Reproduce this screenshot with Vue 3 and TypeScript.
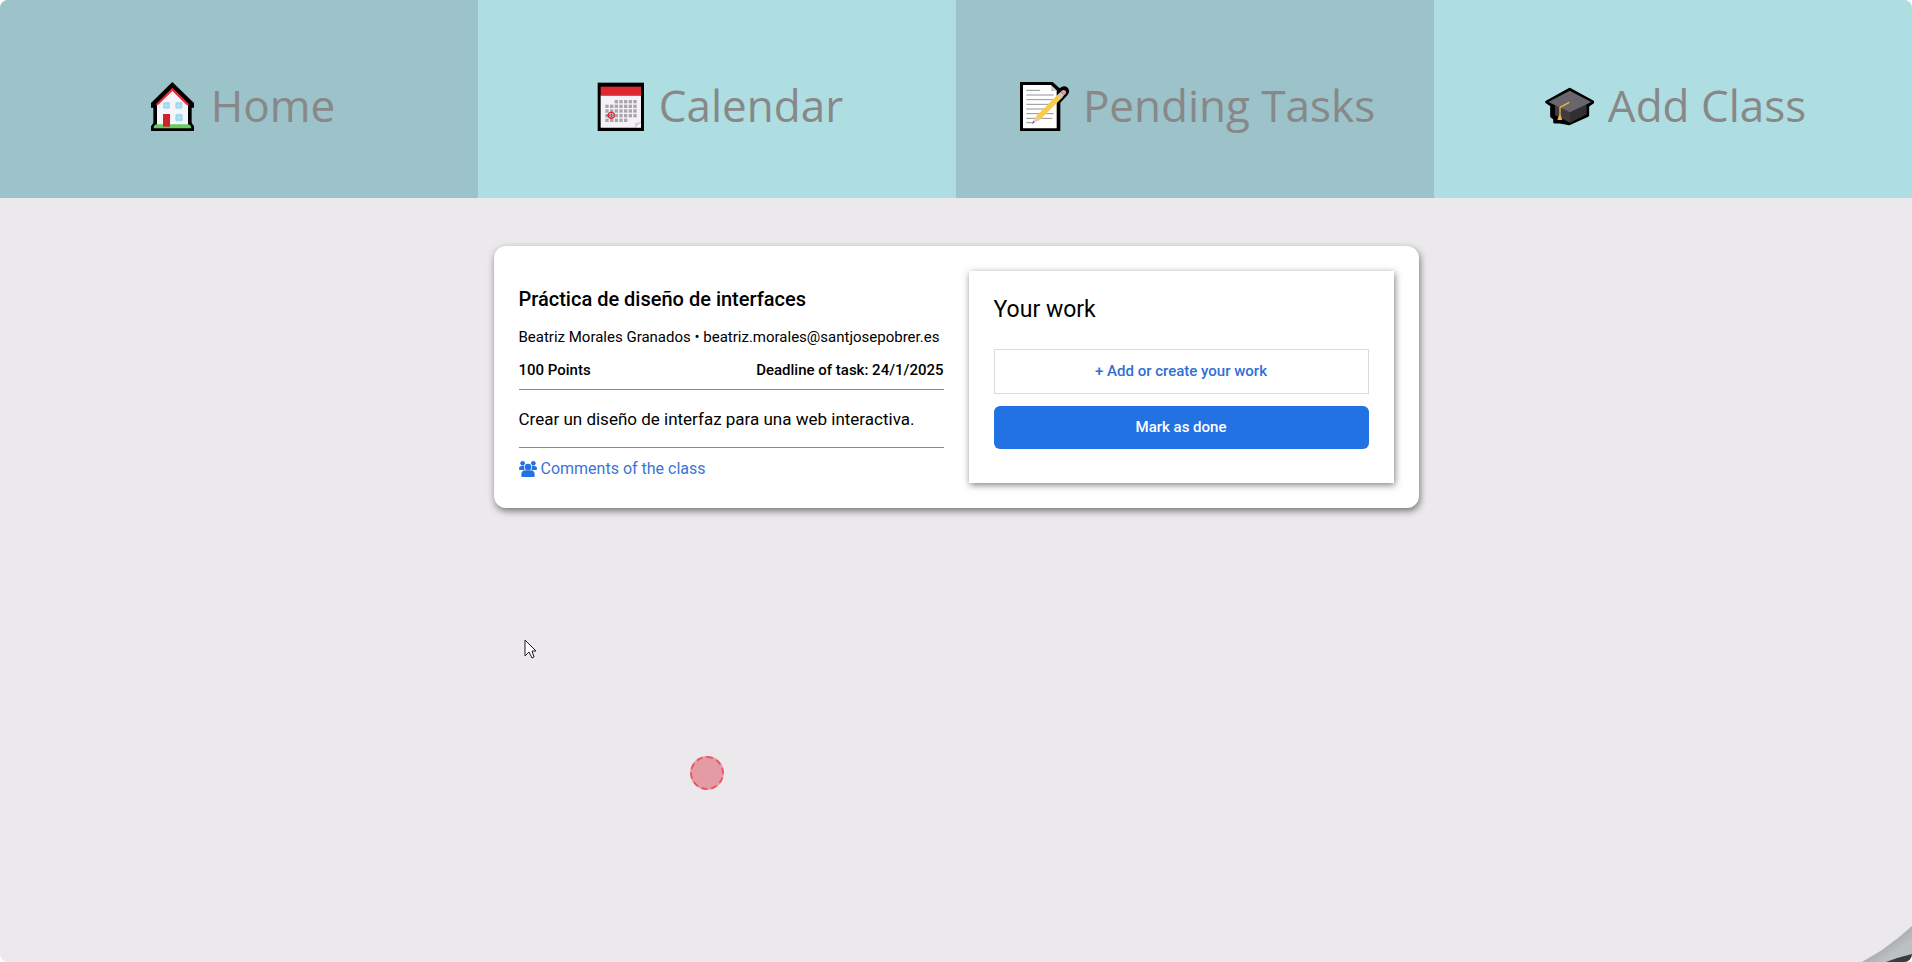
<script setup lang="ts">
type IconName = 'home' | 'calendar' | 'tasks' | 'class'

interface NavItem {
  icon: IconName
  label: string
}

interface Task {
  title: string
  teacher: string
  email: string
  points: number
  deadline: string
  description: string
}

const navItems: NavItem[] = [
  { icon: 'home', label: 'Home' },
  { icon: 'calendar', label: 'Calendar' },
  { icon: 'tasks', label: 'Pending Tasks' },
  { icon: 'class', label: 'Add Class' },
]

const task: Task = {
  title: 'Práctica de diseño de interfaces',
  teacher: 'Beatriz Morales Granados',
  email: 'beatriz.morales@santjosepobrer.es',
  points: 100,
  deadline: '24/1/2025',
  description: 'Crear un diseño de interfaz para una web interactiva.',
}

const calendarDays: [number, number][] = []
for (let row = 0; row < 5; row++) {
  for (let col = 0; col < 7; col++) {
    if ((row === 0 && col < 2) || (row === 4 && col > 4)) continue
    calendarDays.push([73 + col * 14, 91 + row * 14])
  }
}
</script>

<template>
  <div class="page">
    <nav class="nav">
      <a v-for="item in navItems" :key="item.label" class="nav-item" href="#">
        <svg v-if="item.icon === 'home'" class="emoji" viewBox="51 36 147 147" aria-hidden="true">
          <path d="M124 36 60 99v14h7v46l-7 10v14h129v-14l-7-10v-46h7V99Z" fill="#000" />
          <path d="M124 60 78 105v62h93v-62Z" fill="#f5f4f8" />
          <path d="m73 104 51-51 52 51h-10l-42-41-42 41Z" fill="#e0303a" />
          <path d="M68 175q0-12 11-12h90q11 0 12 12Z" fill="#6cc964" />
          <rect x="96" y="132" width="21" height="38" fill="#d2202f" />
          <g fill="#9bd9ed">
            <rect x="96" y="96" width="21" height="20" rx="5" />
            <rect x="133" y="96" width="21" height="20" rx="5" />
            <rect x="133" y="132" width="22" height="22" rx="5" />
          </g>
          <path d="M106 96v20M143 96v20M144 132v22M96 106h21M133 106h21M133 143h22" stroke="#c3e6f2" stroke-width="2" />
        </svg>
        <svg v-else-if="item.icon === 'calendar'" class="emoji" viewBox="45 37 147 147" aria-hidden="true">
          <rect x="50" y="39" width="139" height="145" fill="#000" />
          <path d="M59 77h121v80l-18 17H59Z" fill="#f4f2f8" />
          <path d="m180 157-18 17v-14Z" fill="#d3d0d8" />
          <path d="m180 157v17h-18Z" fill="#fff" />
          <rect x="59" y="51" width="121" height="27" fill="#df2730" />
          <rect v-for="[x, y] in calendarDays" :key="`${x}-${y}`" :x="x" :y="y" width="10" height="10" fill="#a9a6ab" />
          <circle cx="91" cy="137" r="9" fill="none" stroke="#df2730" stroke-width="4" />
          <path d="M77 137h10M91 131v12" stroke="#df2730" stroke-width="3" />
        </svg>
        <svg v-else-if="item.icon === 'tasks'" class="emoji" viewBox="43 36 147 147" aria-hidden="true">
          <path d="M43 36h98l21 19q12-11 24-2 9 11-1 23l-21 22v85H43Z" fill="#000" />
          <path d="M52 45h84v16h17v114H52Z" fill="#fff" />
          <path d="m136 45 17 16h-17Z" fill="#d5d2d9" />
          <path d="M62 61h41M62 75h82M62 89h82M62 103h72M62 117h62M62 131h82M62 145h78M62 158h20" stroke="#92939b" stroke-width="3" />
          <path d="m91 139 68-68 12 11-69 68Z" fill="#f8cb50" />
          <path d="m91 139 11 11-23 11Z" fill="#efc7b5" />
          <path d="m83 152-4 9 8-4Z" fill="#555" />
          <path d="m156 74 9-9 11 10-9 10Z" fill="#cbc6cf" />
          <path d="m165 65 5-4q6-3 10 2 4 6-1 10l-3 2Z" fill="#e49b98" />
        </svg>
        <svg v-else class="emoji" viewBox="42 36 147 147" aria-hidden="true">
          <path
            d="M116 58 47 96l15 10v33l9 7v10h16l28 5 55-25v-29l16-11Z"
            fill="#000"
            stroke="#000"
            stroke-width="9"
            stroke-linejoin="round"
          />
          <path d="m72 103 45 23 49-23v30l-49 25-45-23Z" fill="#3d3c3f" />
          <path d="m117 126 49-23v30l-49 25Z" fill="#302f32" />
          <path d="m116 62 65 34-64 31-65-31Z" fill="#68656c" />
          <path d="m115 97-28 15v37" fill="none" stroke="#f5b441" stroke-width="4" />
          <path d="m84 136-5 14h15l-5-14Z" fill="#f5b441" />
        </svg>
        <span>{{ item.label }}</span>
      </a>
    </nav>

    <main class="content">
      <article class="card">
        <section class="details">
          <h1 class="title">{{ task.title }}</h1>
          <p class="author">{{ task.teacher }} • {{ task.email }}</p>
          <div class="meta">
            <span>{{ task.points }} Points</span>
            <span>Deadline of task: {{ task.deadline }}</span>
          </div>
          <p class="description">{{ task.description }}</p>
          <a class="comments" href="#">
            <svg class="people" viewBox="0 0 54 48" aria-hidden="true">
              <circle cx="11" cy="7" r="7" />
              <circle cx="43" cy="7" r="7" />
              <path d="M0 25v-2q0-8 8-8h8q-3 6 1 12H3q-3 0-3-2ZM54 25v-2q0-8-8-8h-8q3 6-1 12h14q3 0 3-2Z" />
              <circle cx="27" cy="18" r="10" />
              <path d="M7 45v-4q0-13 13-13h14q13 0 13 13v4q0 3-3 3H10q-3 0-3-3Z" />
            </svg>
            <span>Comments of the class</span>
          </a>
        </section>

        <section class="work">
          <h2 class="work-title">Your work</h2>
          <button class="add" type="button">+ Add or create your work</button>
          <button class="done" type="button">Mark as done</button>
        </section>
      </article>
    </main>

    <svg class="pointer" viewBox="0 0 13 20" aria-hidden="true">
      <path d="M1 1v16l4-4 3 6 2-1-2-6h4Z" fill="#fff" stroke="#1d1b22" stroke-linejoin="round" />
    </svg>
    <span class="marker"></span>
    <svg class="corner" viewBox="0 0 50 36" aria-hidden="true">
      <defs>
        <linearGradient id="fold" x1="0" y1="0" x2="1" y2="1">
          <stop offset="0.3" stop-color="#9b9c9f" />
          <stop offset="0.7" stop-color="#bcc1c4" />
        </linearGradient>
      </defs>
      <path d="M0 36 20 24 36 12 50 0v36Z" fill="url(#fold)" />
      <path d="M24 36q13-5 26-8v8Z" fill="#393d42" />
    </svg>
  </div>
</template>

<style>
body {
  margin: 0;
  background: #fff;
}
</style>

<style scoped>
* {
  box-sizing: border-box;
}

.page {
  position: relative;
  min-height: 100vh;
  overflow: hidden;
  border-radius: 8px;
  background: #ece9ed;
  color: #000;
  font-family: Roboto, "Liberation Sans", sans-serif;
}

.nav {
  display: grid;
  grid-template-columns: repeat(4, 1fr);
}

.nav-item {
  display: flex;
  align-items: center;
  justify-content: center;
  gap: 14px;
  padding: 75px 0 63px 5px;
  background: #aedde2;
  color: #888;
  font-family: "Open Sans", "Noto Sans", sans-serif;
  font-size: 44px;
  line-height: 60px;
  text-decoration: none;
  white-space: nowrap;
}

.nav-item:nth-child(odd) {
  background: #9cc2ca;
}

.emoji {
  width: 49px;
  height: 49px;
  margin-top: 2px;
}

.content {
  display: flex;
  justify-content: center;
  padding: 48px 24px;
}

.card {
  display: grid;
  grid-template-columns: 1fr 1fr;
  gap: 25px;
  width: 100%;
  max-width: 925px;
  padding: 25px;
  border-radius: 12px;
  background: #fff;
  box-shadow: 1px 3px 7px rgba(0, 0, 0, 0.5);
}

.details {
  padding-top: 16px;
}

.title {
  margin: 0 0 17px;
  font-size: 20px;
  font-weight: 500;
  line-height: 24px;
}

.author {
  margin: 0 0 15px;
  font-size: 15px;
  line-height: 18px;
}

.meta {
  display: flex;
  justify-content: space-between;
  padding-bottom: 10px;
  border-bottom: 1px solid #88888e;
  font-size: 15px;
  font-weight: 500;
  line-height: 18px;
}

.description {
  margin: 0 0 11px;
  padding: 18px 0 17px;
  border-bottom: 1px solid #88888e;
  font-size: 17px;
  line-height: 22px;
}

.comments {
  display: inline-flex;
  align-items: center;
  gap: 4px;
  color: #3b75d4;
  font-size: 16px;
  line-height: 20px;
  text-decoration: none;
}

.people {
  width: 18px;
  height: 16px;
  fill: #2372e4;
}

.work {
  display: flex;
  flex-direction: column;
  padding: 25px 25px 34px;
  background: #fff;
  box-shadow: 1px 2px 7px rgba(0, 0, 0, 0.5);
}

.work-title {
  margin: 0 0 25px;
  font-size: 23px;
  font-weight: 400;
  line-height: 28px;
}

.add,
.done {
  font-family: inherit;
  font-size: 15px;
  font-weight: 500;
  line-height: 17px;
  cursor: pointer;
}

.add {
  margin-bottom: 12px;
  padding: 13px;
  border: 1px solid #dcd9e2;
  background: #fff;
  color: #2f6fd6;
}

.done {
  padding: 13px;
  border: 0;
  border-radius: 6px;
  background: #2372e4;
  color: #fff;
}

.pointer {
  position: absolute;
  top: 639px;
  left: 524px;
  width: 13px;
  height: 20px;
}

.marker {
  position: absolute;
  top: 756px;
  left: 690px;
  width: 34px;
  height: 34px;
  border: 2px dashed #ec5565;
  border-radius: 50%;
  background: #e59ba4;
}

.corner {
  position: absolute;
  right: 0;
  bottom: 0;
  width: 50px;
  height: 36px;
}
</style>
